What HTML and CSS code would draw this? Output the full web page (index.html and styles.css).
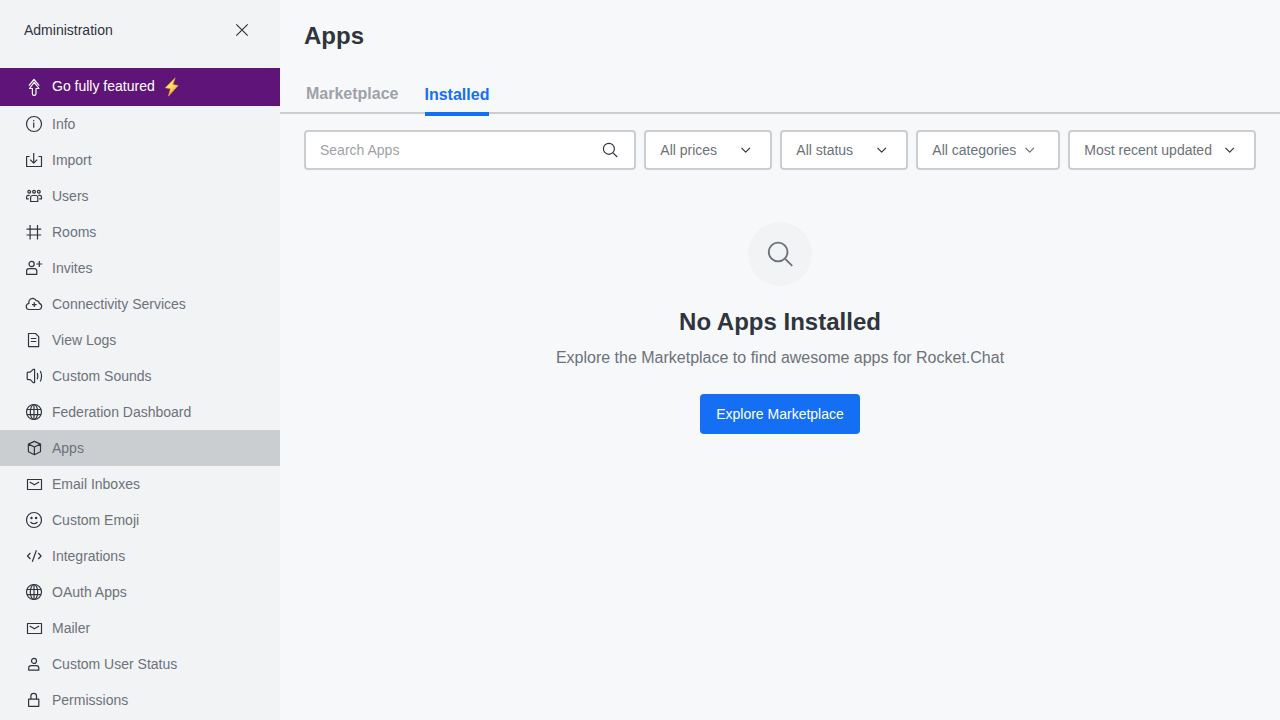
FILE: index.html
```html
<!DOCTYPE html>
<html lang="en">
<head>
<meta charset="utf-8">
<title>Apps</title>
<link rel="stylesheet" href="styles.css">
</head>
<body>
<svg class="defs" width="0" height="0">
  <symbol id="globe" viewBox="0 0 20 20"><circle cx="10" cy="10" r="7.5"/><ellipse cx="10" cy="10" rx="3.7" ry="7.5"/><path d="M10 2.500v15M3 7.500h14M3 12.700h14"/></symbol>
  <symbol id="mail" viewBox="0 0 20 20"><path d="M3.500 5.500h14v10h-14zM5.700 8l4.700 2.800 4.700-2.800"/></symbol>
  <symbol id="search" viewBox="0 0 20 20"><circle cx="8.900" cy="8.800" r="5.500"/><path d="M13 12.900l4.200 4.100"/></symbol>
  <symbol id="down" viewBox="0 0 20 20"><path d="M5.500 7.800l4.200 4.400 4.200-4.400"/></symbol>
</svg>
<div class="layout">
  <aside class="sidebar">
    <header class="sidebar-header"><span>Administration</span>
      <svg class="icon" viewBox="0 0 20 20"><path d="M4.300 4.300l11.400 11.400M15.700 4.300L4.300 15.700"/></svg></header>
    <nav class="menu">
      <a class="item upgrade"><svg class="icon" viewBox="0 0 20 20"><path d="M4.900 8.600L10 2.500l5.200 6.100M10.200 5.300L5.500 11.500h2.900v5.200q0 1.600 1.800 1.600t1.800-1.600v-5.200h3z"/></svg><span>Go fully featured</span>
        <svg class="bolt" viewBox="0 0 20 20"><defs><linearGradient id="gold" x1="0" y1="0" x2="0.600" y2="1"><stop offset="0" stop-color="#f5a932"/><stop offset="0.500" stop-color="#ffe96b"/><stop offset="1" stop-color="#f29c25"/></linearGradient></defs><path d="M12.200.8L2.300 10.800l5.100.9-2 7.500 9.700-10.600-5.300-1z" fill="url(#gold)" stroke="#f2a12d" stroke-width=".6"/></svg></a>
      <a class="item"><svg class="icon" viewBox="0 0 20 20"><circle cx="10" cy="10" r="7.500"/><path d="M9.700 8.500v5.300M9.700 6v1.300"/></svg><span>Info</span></a>
      <a class="item"><svg class="icon" viewBox="0 0 20 20"><path d="M5.700 6.500H2.600v10h14.900v-10h-3.100M9.700 3v10.200M6.200 9.700l3.500 3.500 3.500-3.500"/></svg><span>Import</span></a>
      <a class="item"><svg class="icon" viewBox="0 0 20 20"><circle cx="5.200" cy="5.800" r="1.400"/><circle cx="10" cy="5.800" r="1.400"/><circle cx="14.800" cy="5.800" r="1.400"/><path d="M6.600 15.500v-4q0-2 2-2h3.200q2 0 2 2v4zM5.700 9.300H4.300Q2.600 9.300 2.600 11v1.800h2.200M14.300 9.300h1.500q1.700 0 1.700 1.700v1.800h-2.200"/></svg><span>Users</span></a>
      <a class="item"><svg class="icon" viewBox="0 0 20 20"><path d="M6.100 3v14.500M13.500 3v14.500M2.500 7.200h14.700M2.500 13h14.700"/></svg><span>Rooms</span></a>
      <a class="item"><svg class="icon" viewBox="0 0 20 20"><circle cx="7.600" cy="6" r="2.600"/><path d="M2.600 16.300v-3.200q0-2.500 2.500-2.500h5.200q2.500 0 2.500 2.500v3.200zM15.300 3.100v5.800M12.400 6h5.800"/></svg><span>Invites</span></a>
      <a class="item"><svg class="icon" viewBox="0 0 20 20"><path d="M5.500 15.500h9.100a3.100 3.100 0 0 0 .7-6.100q0-2.700-3.200-2.800A3.800 3.800 0 0 0 5.200 6.500 3.800 3.800 0 0 0 5 9.500a3 3 0 0 0 .5 6zM10.300 8.300v4.600M8 10.600h4.600"/></svg><span>Connectivity Services</span></a>
      <a class="item"><svg class="icon" viewBox="0 0 20 20"><path d="M4.500 3.500h7l3.200 3.200v9.900H4.500zM6.800 8.500h5.500M6.800 11.500h5.500"/></svg><span>View Logs</span></a>
      <a class="item"><svg class="icon" viewBox="0 0 20 20"><path d="M10.600 3.400H9.200L6.300 6.100H4.200q-1 0-1 1v5.600q0 1 1 1h2.100l2.900 2.900h1.400zM13.300 7q1.100 3 0 6.200M16.300 5q2.500 5 0 10.400"/></svg><span>Custom Sounds</span></a>
      <a class="item"><svg class="icon"><use href="#globe"/></svg><span>Federation Dashboard</span></a>
      <a class="item active"><svg class="icon" viewBox="0 0 20 20"><path d="M10.400 3.400l6.100 2.700v7.700l-6.100 2.900-6-2.900V6.100zM4.400 6.100l6 2.900 6.100-2.900M10.400 9v7.500"/></svg><span>Apps</span></a>
      <a class="item"><svg class="icon"><use href="#mail"/></svg><span>Email Inboxes</span></a>
      <a class="item"><svg class="icon" viewBox="0 0 20 20"><circle cx="10" cy="10" r="7.500"/><path d="M6.500 12q3.500 3.400 7 0"/><circle class="dot" cx="7.500" cy="8" r="1.200"/><circle class="dot" cx="12.100" cy="8" r="1.200"/></svg><span>Custom Emoji</span></a>
      <a class="item"><svg class="icon" viewBox="0 0 20 20"><path d="M6.400 7l-2.900 3 2.900 3M14.200 7l2.900 3-2.900 3M12.400 4.200L8.300 15.800"/></svg><span>Integrations</span></a>
      <a class="item"><svg class="icon"><use href="#globe"/></svg><span>OAuth Apps</span></a>
      <a class="item"><svg class="icon"><use href="#mail"/></svg><span>Mailer</span></a>
      <a class="item"><svg class="icon" viewBox="0 0 20 20"><circle cx="10" cy="6.900" r="2.500"/><path d="M4.700 16.200v-2.100q0-2.400 2.400-2.400h5.300q2.400 0 2.400 2.400v2.100z"/></svg><span>Custom User Status</span></a>
      <a class="item"><svg class="icon" viewBox="0 0 20 20"><path d="M4.600 9.100h10.200v7.200H4.600zM6.900 9V6q0-2.600 2.800-2.600T12.500 6v3"/></svg><span>Permissions</span></a>
    </nav>
  </aside>
  <main class="main">
    <h1 class="title">Apps</h1>
    <div class="tabs"><a class="tab">Marketplace</a><a class="tab selected">Installed</a></div>
    <div class="filters">
      <div class="field search"><span>Search Apps</span><svg class="icon"><use href="#search"/></svg></div>
      <div class="field small"><span>All prices</span><svg class="icon"><use href="#down"/></svg></div>
      <div class="field small"><span>All status</span><svg class="icon"><use href="#down"/></svg></div>
      <div class="field categories"><span>All categories</span><svg class="icon"><use href="#down"/></svg></div>
      <div class="field sort"><span>Most recent updated</span><svg class="icon"><use href="#down"/></svg></div>
    </div>
    <section class="empty">
      <div class="badge"><svg class="badge-icon"><use href="#search"/></svg></div>
      <h2 class="empty-title">No Apps Installed</h2>
      <p class="empty-text">Explore the Marketplace to find awesome apps for Rocket.Chat</p>
      <button class="button">Explore Marketplace</button>
    </section>
  </main>
</div>
</body>
</html>
```
FILE: styles.css
```css
* { box-sizing: border-box; }
body { margin: 0; font: 14px/20px "Liberation Sans", Arial, sans-serif; color: #2f343d; background: #f7f8fa; }
.defs { display: none; }
.layout { display: flex; height: 720px; overflow: hidden; }
.sidebar { flex: none; width: 280px; background: #f2f3f5; }
.sidebar-header { display: flex; align-items: center; justify-content: space-between; height: 68px; padding: 0 28px 8px 24px; }
.icon { flex: none; width: 20px; height: 20px; fill: none; stroke: #2f343d; stroke-width: 1.2; stroke-linejoin: round; }
.dot { fill: #2f343d; stroke: none; }
.item { display: flex; align-items: center; gap: 8px; height: 36px; padding-left: 24px; color: #6c727a; }
.item.active { background: #cbced1; }
.upgrade { height: 38px; background: #5f1477; color: #fff; }
.upgrade span { padding-bottom: 2px; }
.upgrade .icon { stroke: #fff; }
.bolt { width: 20px; height: 20px; }
.main { flex: 1; min-width: 0; }
.title { margin: 0; padding: 20px 24px 0; font-size: 24px; line-height: 32px; }
.tabs { display: flex; gap: 26px; height: 46px; margin: 16px 0; padding: 0 26px; border-bottom: 2px solid #cbced1; }
.tab { height: 48px; padding-top: 14px; color: #9ea2a8; font-size: 16px; font-weight: 700; line-height: 24px; }
.tab.selected { padding-top: 15px; color: #156ff5; border-bottom: 4px solid #156ff5; }
.filters { display: flex; gap: 8px; padding: 0 24px; }
.field { display: flex; align-items: center; justify-content: space-between; height: 40px; padding: 0 14px; color: #6c727a; background: #fff; border: 2px solid #cbced1; border-radius: 4px; white-space: nowrap; }
.search { flex: 1; color: #9ea2a8; }
.small { width: 128px; padding-left: 14.3px; }
.categories { width: 144px; justify-content: flex-start; gap: 4px; padding-left: 14.3px; }
.categories .icon { stroke: #6c727a; }
.sort { width: 188px; padding-left: 14.3px; }
.empty { display: flex; flex-direction: column; align-items: center; padding-top: 52px; }
.badge { display: flex; align-items: center; justify-content: center; width: 64px; height: 64px; background: #f2f3f5; border-radius: 50%; }
.badge-icon { width: 34px; height: 34px; fill: none; stroke: #6c727a; stroke-width: 1.1; }
.empty-title { margin: 20px 0 0; font-size: 24px; line-height: 32px; }
.empty-text { margin: 8px 0 0; color: #6c727a; font-size: 16px; line-height: 24px; }
.button { height: 40px; margin-top: 24px; padding: 0 16px; color: #fff; background: #156ff5; border: 0; border-radius: 4px; font: inherit; }
```
